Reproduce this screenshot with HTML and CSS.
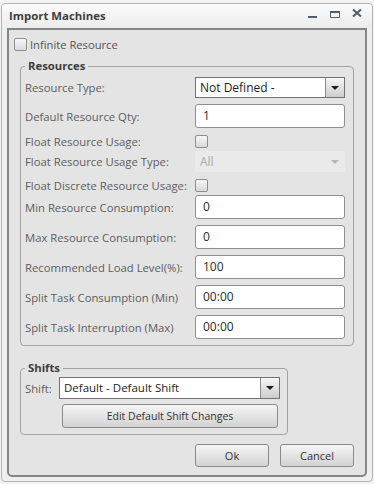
FILE: index.html
```html
<!DOCTYPE html>
<html lang="en">
<head>
    <meta charset="UTF-8">
    <title>Import Machines</title>
    <link rel="stylesheet" href="styles.css">
</head>
<body>
    <div class="window">
        <!-- Title bar -->
        <div class="titlebar">
            <span class="title">Import Machines</span>
            <div class="win-controls">
                <svg class="win-btn" width="12" height="12" viewBox="0 0 12 12"><rect x="1" y="7" width="9" height="2" fill="#4e5c6f"/></svg>
                <svg class="win-btn" width="12" height="12" viewBox="0 0 12 12"><path d="M1.5 2.5h9v6h-9z" fill="none" stroke="#4e5c6f"/><rect x="1" y="2" width="10" height="2" fill="#4e5c6f"/></svg>
                <svg class="win-btn close" width="12" height="12" viewBox="0 0 12 12"><path d="M2 1.5l8 7M10 1.5l-8 7" stroke="#4e5c6f" stroke-width="2"/></svg>
            </div>
        </div>

        <!-- Content -->
        <div class="panel">
            <div class="check-line">
                <span class="checkbox"></span>
                <span>Infinite Resource</span>
            </div>

            <fieldset class="group resources">
                <legend>Resources</legend>
                <div class="form-rows">
                    <div class="row row-select">
                        <span class="label">Resource Type:</span>
                        <div class="select"><span class="select-text">Not Defined -</span><span class="select-arrow"></span></div>
                    </div>
                    <div class="row row-input">
                        <span class="label">Default Resource Qty:</span>
                        <div class="input">1</div>
                    </div>
                    <div class="row row-check">
                        <span class="label">Float Resource Usage:</span>
                        <span class="checkbox"></span>
                    </div>
                    <div class="row row-select">
                        <span class="label">Float Resource Usage Type:</span>
                        <div class="select disabled"><span class="select-text">All</span><span class="select-arrow"></span></div>
                    </div>
                    <div class="row row-check">
                        <span class="label">Float Discrete Resource Usage:</span>
                        <span class="checkbox"></span>
                    </div>
                    <div class="row row-input">
                        <span class="label">Min Resource Consumption:</span>
                        <div class="input">0</div>
                    </div>
                    <div class="row row-input">
                        <span class="label">Max Resource Consumption:</span>
                        <div class="input">0</div>
                    </div>
                    <div class="row row-input">
                        <span class="label">Recommended Load Level(%):</span>
                        <div class="input">100</div>
                    </div>
                    <div class="row row-input">
                        <span class="label">Split Task Consumption (Min)</span>
                        <div class="input">00:00</div>
                    </div>
                    <div class="row row-input">
                        <span class="label">Split Task Interruption (Max)</span>
                        <div class="input">00:00</div>
                    </div>
                </div>
            </fieldset>

            <fieldset class="group shifts">
                <legend>Shifts</legend>
                <div class="shift-grid">
                    <span class="label">Shift:</span>
                    <div class="select"><span class="select-text">Default - Default Shift</span><span class="select-arrow"></span></div>
                    <button class="btn edit-btn">Edit Default Shift Changes</button>
                </div>
            </fieldset>

            <div class="actions">
                <button class="btn">Ok</button>
                <button class="btn">Cancel</button>
            </div>
        </div>
    </div>
</body>
</html>
```

FILE: styles.css
```css
/* Reset */
* {
    margin: 0;
    padding: 0;
    box-sizing: border-box;
}

body {
    font-family: 'Open Sans', 'Noto Sans', sans-serif;
    font-size: 11px;
    background-color: #f3f3f3;
    width: 374px;
    height: 484px;
    padding: 3px 1px 2px 1px;
}

/* Window frame */
.window {
    height: 479px;
    border: 1px solid #b3b3b3;
    border-radius: 4px;
    background-color: #efefef;
    display: flex;
    flex-direction: column;
}

.titlebar {
    height: 24px;
    display: flex;
    align-items: center;
    justify-content: space-between;
    padding: 0 9px 2px 7px;
    background: linear-gradient(#fbfbfb, #ececec);
    border-radius: 4px 4px 0 0;
}

.title {
    font-size: 11.4px;
    font-weight: 700;
    color: #3d3d3d;
}

.win-controls {
    display: flex;
    align-items: center;
    gap: 10px;
}

.win-btn.close {
    margin-top: -3px;
}

/* Inner panel */
.panel {
    flex: 1;
    margin: 0 5px 4px 5px;
    border: 2px solid #858585;
    border-radius: 0 0 5px 5px;
    background-color: #e4e4e4;
    padding: 8px 11px 0 5px;
    color: #5b5b5b;
}

.check-line {
    display: flex;
    align-items: center;
    gap: 3px;
    height: 13px;
    font-size: 11.2px;
    color: #555555;
}

.checkbox {
    width: 13px;
    height: 13px;
    border: 1px solid #8e8e8e;
    border-radius: 2px;
    background: linear-gradient(#f7f7f7, #d9d9d9);
    flex-shrink: 0;
}

/* Group boxes */
.group {
    border: 1px solid #a2a2a2;
    border-radius: 4px;
    margin-left: 6px;
}

.group legend {
    font-size: 11.3px;
    font-weight: 700;
    color: #3e3e3e;
    padding: 0 3px;
    line-height: 16px;
}

.resources {
    margin-top: 7px;
    padding: 3px 6px 6px 4px;
}

.form-rows {
    display: flex;
    flex-direction: column;
    gap: 6px;
}

.row {
    display: grid;
    grid-template-columns: 170px 150px;
    align-items: center;
}

.row-select {
    height: 21px;
}

.row-input {
    height: 24px;
}

.row-check {
    height: 11px;
}

.label {
    font-size: 11.3px;
    color: #5d5d5d;
    white-space: nowrap;
}

/* Fields */
.input {
    height: 24px;
    background-color: #ffffff;
    border: 1px solid #8f8f8f;
    border-radius: 3px;
    font-size: 12px;
    color: #2b2b2b;
    padding-left: 7px;
    line-height: 22px;
}

.select {
    height: 21px;
    display: flex;
    background-color: #ffffff;
    border: 1px solid #727272;
    font-size: 12px;
    color: #1e1e1e;
}

.select-text {
    flex: 1;
    padding-left: 4px;
    line-height: 19px;
}

.select-arrow {
    width: 19px;
    border-left: 1px solid #8c8c8c;
    background: linear-gradient(#f6f6f6, #cdcdcd);
    position: relative;
}

.select-arrow::after {
    content: '';
    position: absolute;
    left: 5px;
    top: 8px;
    border-left: 4px solid transparent;
    border-right: 4px solid transparent;
    border-top: 4px solid #1f1f1f;
}

.select.disabled {
    background-color: #eaeaea;
    border-color: #eaeaea;
    color: #a9a9a9;
}

.select.disabled .select-arrow {
    background: #eaeaea;
    border-left-color: #eaeaea;
}

.select.disabled .select-arrow::after {
    border-top-color: #b5b5b5;
}

/* Shifts */
.shifts {
    width: 268px;
    margin-top: 14px;
    padding: 1px 7px 6px 4px;
}

.shift-grid {
    display: grid;
    grid-template-columns: 34px 1fr;
    row-gap: 5px;
    align-items: center;
}

.shift-grid .select {
    height: 22px;
    font-size: 11.5px;
}

.shift-grid .select-text {
    line-height: 20px;
}

.edit-btn {
    grid-column: 2;
    margin: 0 2px 0 3px;
}

/* Buttons */
.btn {
    height: 24px;
    font-family: 'Open Sans', 'Noto Sans', sans-serif;
    font-size: 10.5px;
    color: #333333;
    border: 1px solid #8a8a8a;
    border-radius: 3px;
    background: linear-gradient(#f5f5f5, #d3d3d3);
}

.actions {
    display: flex;
    justify-content: flex-end;
    gap: 11px;
    margin-top: 9px;
}

.actions .btn {
    width: 74px;
    height: 23px;
    font-size: 11px;
}
```
